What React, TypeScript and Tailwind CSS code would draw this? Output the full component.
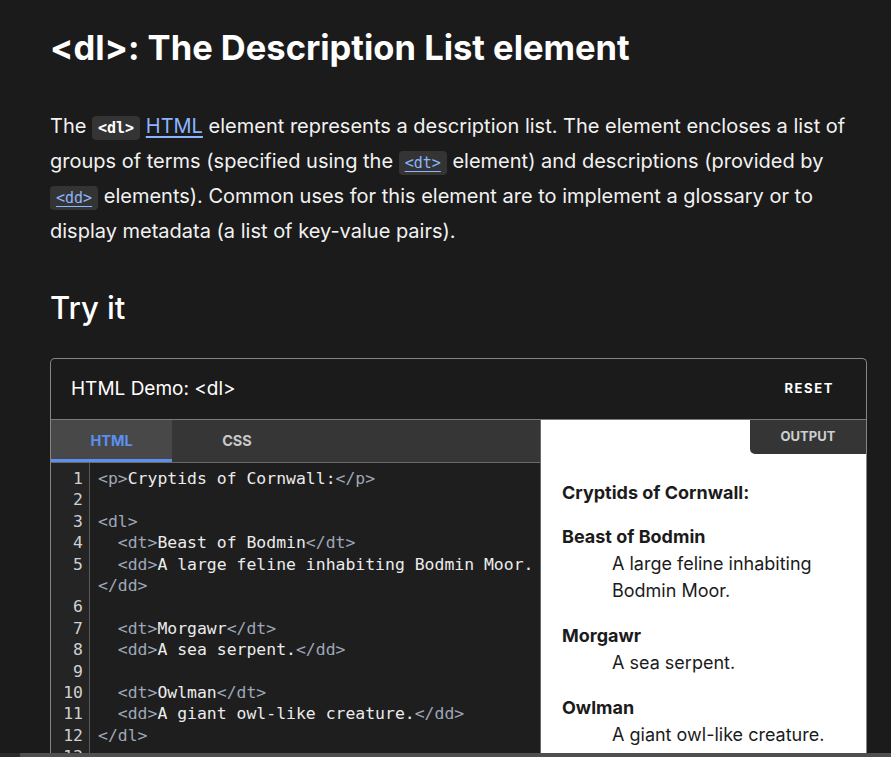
import React from "react";

const T = ({ children }: { children: React.ReactNode }) => (
  <span className="text-[#9ea7b8]">{children}</span>
);

type Row = { n?: number; c: React.ReactNode };

const rows: Row[] = [
  { n: 1, c: (<><T>&lt;p&gt;</T>Cryptids of Cornwall:<T>&lt;/p&gt;</T></>) },
  { n: 2, c: "" },
  { n: 3, c: (<T>&lt;dl&gt;</T>) },
  { n: 4, c: (<>{"  "}<T>&lt;dt&gt;</T>Beast of Bodmin<T>&lt;/dt&gt;</T></>) },
  { n: 5, c: (<>{"  "}<T>&lt;dd&gt;</T>A large feline inhabiting Bodmin Moor.</>) },
  { c: (<T>&lt;/dd&gt;</T>) },
  { n: 6, c: "" },
  { n: 7, c: (<>{"  "}<T>&lt;dt&gt;</T>Morgawr<T>&lt;/dt&gt;</T></>) },
  { n: 8, c: (<>{"  "}<T>&lt;dd&gt;</T>A sea serpent.<T>&lt;/dd&gt;</T></>) },
  { n: 9, c: "" },
  { n: 10, c: (<>{"  "}<T>&lt;dt&gt;</T>Owlman<T>&lt;/dt&gt;</T></>) },
  { n: 11, c: (<>{"  "}<T>&lt;dd&gt;</T>A giant owl-like creature.<T>&lt;/dd&gt;</T></>) },
  { n: 12, c: (<T>&lt;/dl&gt;</T>) },
  { n: 13, c: "" },
];

const codeBase =
  "rounded-[4px] bg-[#343434] px-[6px] py-[3px] font-['DejaVu_Sans_Mono',monospace] text-[15px] leading-none";

export default function App() {
  return (
    <div className="h-[757px] overflow-hidden bg-[#1b1b1b] flex flex-col font-['Inter',sans-serif] text-white">
      <div className="flex-1 overflow-hidden pl-[50px]">
        <h1 className="pt-[24px] text-[34.5px] leading-[48px] font-bold text-white">
          &lt;dl&gt;: The Description List element
        </h1>
        <p className="mt-[37px] w-[800px] text-[20px] leading-[35px] text-[#f2f2f2]">
          The{" "}
          <code className={codeBase + " font-bold text-white"}>&lt;dl&gt;</code>{" "}
          <a className="text-[#8cb4ff] underline underline-offset-[3px]">HTML</a> element represents a description list. The element encloses a list of groups of terms (specified using the{" "}
          <code className={codeBase + " text-[#8cb4ff] underline underline-offset-[3px]"}>&lt;dt&gt;</code>{" "}
          element) and descriptions (provided by{" "}
          <code className={codeBase + " text-[#8cb4ff] underline underline-offset-[3px]"}>&lt;dd&gt;</code>{" "}
          elements). Common uses for this element are to implement a glossary or to display metadata (a list of key-value pairs).
        </p>
        <h2 className="mt-[39px] text-[31px] leading-[40px] font-medium text-white">Try it</h2>
        <div className="mt-[30px] w-[817px] rounded-t-[5px] border border-[#858585] border-b-0">
          <div className="flex h-[60px] items-center justify-between pl-[20px] pr-[32px]">
            <span className="text-[19px] text-white">HTML Demo: &lt;dl&gt;</span>
            <span className="text-[13px] font-bold tracking-[1.6px] text-white">RESET</span>
          </div>
          <div className="grid grid-cols-[490px_1fr] border-t border-[#7a7a7a]">
            <div className="border-r border-[#6a6a6a]">
              <div className="flex h-[43px] border-b border-[#6a6a6a] bg-[#363636]">
                <div className="flex w-[121px] items-center justify-center border-b-[3px] border-[#5b8ff0] bg-[#484848] pt-[3px] text-[14.5px] font-bold text-[#5b8ff0]">
                  HTML
                </div>
                <div className="flex w-[130px] items-center justify-center text-[14.5px] font-bold text-[#c9c9c9]">
                  CSS
                </div>
              </div>
              <div className="flex h-[400px] bg-[#1e1e1e] font-['DejaVu_Sans_Mono',monospace] text-[16.45px] leading-[21.4px]">
                <div className="w-[39px] shrink-0 border-r border-[#5a5a5a] bg-[#242424] pr-[6px] pt-[5px] text-right text-[#d0d0d0]">
                  {rows.map((r, i) => (
                    <div key={i} className="h-[21.4px]">{r.n ?? ""}</div>
                  ))}
                </div>
                <div className="flex-1 pl-[8px] pt-[5px] text-[#ececec] whitespace-pre">
                  {rows.map((r, i) => (
                    <div key={i} className="h-[21.4px]">{r.c}</div>
                  ))}
                </div>
              </div>
            </div>
            <div className="relative bg-white text-[#1b1b1b]">
              <div className="absolute right-0 top-0 flex h-[34px] w-[116px] items-center justify-center rounded-bl-[5px] bg-[#353535] text-[13px] font-bold text-[#cfcfcf]">
                OUTPUT
              </div>
              <div className="pl-[21px] pt-[59px] text-[18px] leading-[27px]">
                <p className="mb-[17px] font-bold">Cryptids of Cornwall:</p>
                <dl>
                  <dt className="font-bold">Beast of Bodmin</dt>
                  <dd className="mb-[18px] ml-[50px] w-[230px]">A large feline inhabiting Bodmin Moor.</dd>
                  <dt className="font-bold">Morgawr</dt>
                  <dd className="mb-[18px] ml-[50px]">A sea serpent.</dd>
                  <dt className="font-bold">Owlman</dt>
                  <dd className="mb-[18px] ml-[50px]">A giant owl-like creature.</dd>
                </dl>
              </div>
            </div>
          </div>
        </div>
      </div>
      <div className="flex h-[4px] shrink-0">
        <div className="w-[20px] bg-[#2a2a2a]" />
        <div className="flex-1 bg-[#4f4f4f]" />
      </div>
    </div>
  );
}
